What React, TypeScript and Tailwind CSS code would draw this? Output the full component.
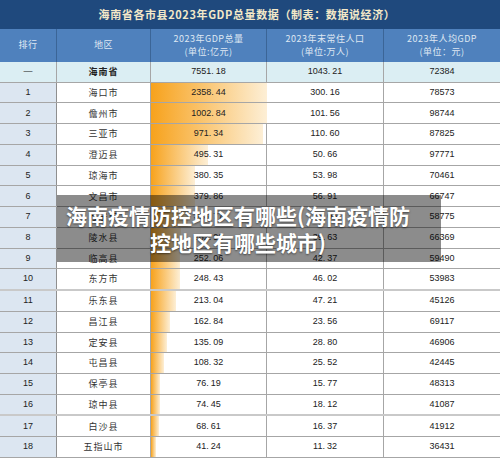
import React from "react";

const rows = [
  { rank: "1", name: "海口市", gdp: "2358.44", pop: "300.16", per: "78573" },
  { rank: "2", name: "儋州市", gdp: "1002.84", pop: "101.56", per: "98744" },
  { rank: "3", name: "三亚市", gdp: "971.34", pop: "110.60", per: "87825" },
  { rank: "4", name: "澄迈县", gdp: "495.31", pop: "50.66", per: "97771" },
  { rank: "5", name: "琼海市", gdp: "380.35", pop: "53.98", per: "70461" },
  { rank: "6", name: "文昌市", gdp: "379.86", pop: "56.91", per: "66747" },
  { rank: "7", name: "万宁市", gdp: "323.77", pop: "55.08", per: "58775" },
  { rank: "8", name: "陵水县", gdp: "262.90", pop: "39.63", per: "66369" },
  { rank: "9", name: "临高县", gdp: "252.06", pop: "42.37", per: "59490" },
  { rank: "10", name: "东方市", gdp: "248.43", pop: "46.02", per: "53983" },
  { rank: "11", name: "乐东县", gdp: "213.04", pop: "47.21", per: "45126" },
  { rank: "12", name: "昌江县", gdp: "162.84", pop: "23.56", per: "69117" },
  { rank: "13", name: "定安县", gdp: "135.09", pop: "28.80", per: "46906" },
  { rank: "14", name: "屯昌县", gdp: "108.32", pop: "25.52", per: "42445" },
  { rank: "15", name: "保亭县", gdp: "76.19", pop: "15.77", per: "48313" },
  { rank: "16", name: "琼中县", gdp: "74.45", pop: "18.12", per: "41087" },
  { rank: "17", name: "白沙县", gdp: "68.61", pop: "16.37", per: "41912" },
  { rank: "18", name: "五指山市", gdp: "41.24", pop: "11.32", per: "36431" },
];

const cjk = "font-['Noto_Sans_CJK_SC',sans-serif]";
const num = "font-['Liberation_Sans','Noto_Sans_CJK_SC',sans-serif]";

function Num({ v }: { v: string }) {
  const [a, b] = v.split(".");
  if (b === undefined) return <span>{v}</span>;
  return (
    <span>
      {a}.<span className="inline-block w-[2px]" />
      {b}
    </span>
  );
}

export default function App() {
  return (
    <div className="relative flex h-[458px] w-[500px] flex-col overflow-hidden bg-white">
      <div
        className={`flex h-[29px] items-center justify-center bg-[#1f497d] pr-[6px] text-[11px] font-bold tracking-[0.6px] text-[#f3e8c8] ${cjk}`}
      >
        海南省各市县2023年GDP总量数据（制表：数据说经济）
      </div>

      <div
        className={`grid h-[33px] grid-cols-[57px_94px_116px_117px_116px] bg-[#4f81bd] text-[9px] leading-[12.5px] tracking-[0.5px] text-[#dfe8f3] ${cjk}`}
      >
        <div className="flex items-center justify-center border-r border-[#3b6597]">排行</div>
        <div className="flex items-center justify-center border-r border-[#3b6597]">地区</div>
        <div className="flex flex-col items-center justify-center border-r border-[#3b6597]">
          <span>2023年GDP总量</span>
          <span>(单位:亿元)</span>
        </div>
        <div className="flex flex-col items-center justify-center border-r border-[#3b6597]">
          <span>2023年末常住人口</span>
          <span>(单位:万人)</span>
        </div>
        <div className="flex flex-col items-center justify-center">
          <span>2023年人均GDP</span>
          <span>(单位：元)</span>
        </div>
      </div>

      <div className="flex flex-1 flex-col text-[9px] text-[#222]">
        <div className="grid flex-1 grid-cols-[57px_94px_116px_117px_116px] border-b border-[#a6a6a6] bg-[#dbeef3]">
          <div className={`flex items-center justify-center border-r border-[#a6a6a6] ${num}`}>—</div>
          <div className={`flex items-center justify-center border-r border-[#a6a6a6] font-bold tracking-[1px] ${cjk}`}>
            海南省
          </div>
          <div className={`flex items-center justify-center border-r border-[#a6a6a6] ${num}`}>
            <Num v="7551.18" />
          </div>
          <div className={`flex items-center justify-center border-r border-[#a6a6a6] ${num}`}>
            <Num v="1043.21" />
          </div>
          <div className={`flex items-center justify-center ${num}`}>72384</div>
        </div>

        {rows.map((r) => {
          const w = Math.min(116, parseFloat(r.gdp) * 0.1155);
          const thick = r.rank === "10" || r.rank === "16";
          return (
            <div
              key={r.rank}
              className={`grid flex-1 grid-cols-[57px_94px_116px_117px_116px] ${
                thick ? "border-b-[2px] border-[#c9c9c9]" : "border-b border-[#a6a6a6]"
              }`}
            >
              <div className={`flex items-center justify-center border-r border-[#8f8f8f] bg-[#dce6f1] ${num}`}>
                {r.rank}
              </div>
              <div className={`flex items-center justify-center border-r border-[#a6a6a6] tracking-[1px] text-[#333] ${cjk}`}>
                {r.name}
              </div>
              <div className={`relative flex items-center justify-center border-r border-[#a6a6a6] ${num}`}>
                <div
                  className="absolute inset-y-0 left-0 bg-[linear-gradient(to_right,#f7a21c,#fdefd6)]"
                  style={{ width: `${w}px` }}
                />
                <span className="relative">
                  <Num v={r.gdp} />
                </span>
              </div>
              <div className={`flex items-center justify-center border-r border-[#a6a6a6] ${num}`}>
                <Num v={r.pop} />
              </div>
              <div className={`flex items-center justify-center ${num}`}>{r.per}</div>
            </div>
          );
        })}
      </div>

      <div
        className={`absolute left-[57px] top-[195px] flex h-[67px] w-[384px] items-center bg-black/45 pl-[8px] pr-[30px] text-[21px] font-bold leading-[27px] text-white [text-shadow:0_1px_2px_rgba(0,0,0,0.5)] ${cjk}`}
      >
        <p className="w-full text-center">海南疫情防控地区有哪些(海南疫情防控地区有哪些城市)</p>
      </div>
    </div>
  );
}
